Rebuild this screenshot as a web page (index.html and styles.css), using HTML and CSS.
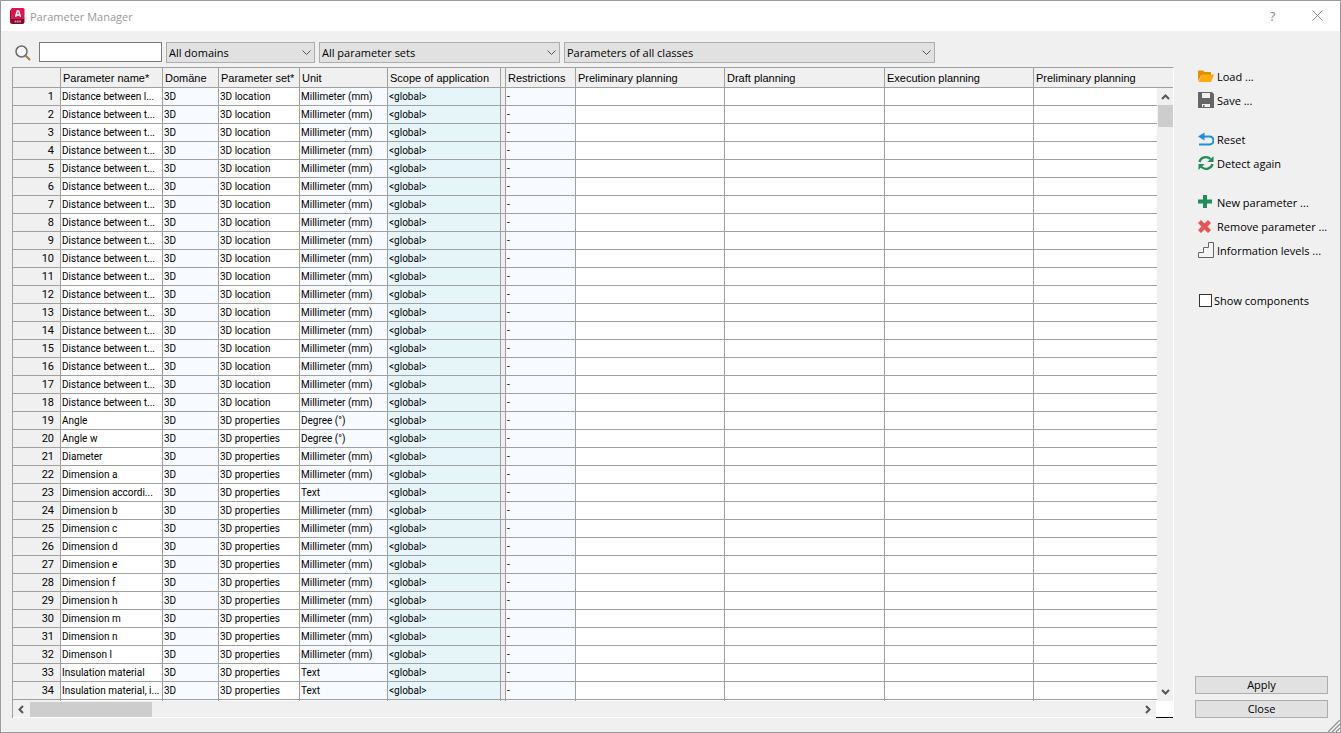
FILE: index.html
```html
<!DOCTYPE html>
<html lang="en">
<head>
  <meta charset="UTF-8" />
  <meta name="viewport" content="width=device-width, initial-scale=1.0"/>
  <title>Parameter Manager</title>
  <link rel="stylesheet" href="styles.css">
</head>
<body>
  <div class="window">
    <header class="titlebar">
      <svg class="logo" width="15" height="17" viewBox="0 0 15 17" aria-hidden="true">
        <path d="M0 2.500L2 1v11l1 4H2a2 2 0 0 1-2-2z" fill="#a80a3c"/>
        <path d="M2 0h11a1.500 1.500 0 0 1 1.500 1.500V11H1V1z" fill="#e51050"/>
        <path d="M1 11h13.500v3a2 2 0 0 1-2 2H2.500z" fill="#7a0a2c"/>
        <path d="M5.500 9L7.300 3h1.400L10.500 9M6.300 7h3.500" fill="none" stroke="#fff" stroke-width="1.500"/>
        <path d="M4.500 13.500h6.500" stroke="#d98aa3" stroke-width="1.800" stroke-dasharray="1.800 .5"/>
      </svg>
      <h1>Parameter Manager</h1>
      <button class="title-btn" aria-label="Help">?</button>
      <button class="title-btn" aria-label="Close window">
        <svg width="11" height="11" viewBox="0 0 11 11"><path d="M.5.5l10 10M10.500.5l-10 10" stroke="#8c8c8c" fill="none"/></svg>
      </button>
    </header>

    <div class="content">
      <main class="main">
        <div class="toolbar">
          <label class="search-icon" for="search" aria-label="Search">
            <svg width="17" height="17" viewBox="0 0 17 17">
              <circle cx="6.500" cy="6.500" r="5.500" fill="#f7f7f7" stroke="#666b70" stroke-width="1.500"/>
              <path d="M10.500 10.500l4.500 4.500" stroke="#b07a35" stroke-width="2"/>
            </svg>
          </label>
          <input type="text" id="search" class="search" />
          <div class="combo combo-domain">
            <select aria-label="Domain"><option>All domains</option></select>
            <svg class="chevron" width="9" height="6" viewBox="0 0 9 6"><path d="M.5.5l4 4 4-4"/></svg>
          </div>
          <div class="combo combo-set">
            <select aria-label="Parameter set"><option>All parameter sets</option></select>
            <svg class="chevron" width="9" height="6" viewBox="0 0 9 6"><path d="M.5.5l4 4 4-4"/></svg>
          </div>
          <div class="combo combo-class">
            <select aria-label="Class"><option>Parameters of all classes</option></select>
            <svg class="chevron" width="9" height="6" viewBox="0 0 9 6"><path d="M.5.5l4 4 4-4"/></svg>
          </div>
        </div>

        <div class="grid">
          <div class="grid-view">
            <table>
              <colgroup>
                <col class="w-num"><col class="w-name"><col class="w-domain"><col class="w-set">
                <col class="w-unit"><col class="w-scope"><col class="w-split"><col class="w-restr">
                <col class="w-phase"><col class="w-draft"><col class="w-phase"><col>
              </colgroup>
              <thead>
                <tr>
                  <th></th><th>Parameter name*</th><th>Domäne</th><th>Parameter set*</th>
                  <th>Unit</th><th>Scope of application</th><th></th><th>Restrictions</th>
                  <th>Preliminary planning</th><th>Draft planning</th><th>Execution planning</th><th>Preliminary planning</th>
                </tr>
              </thead>
              <tbody id="rows"></tbody>
            </table>
            <div class="vscroll">
              <svg width="9" height="6" viewBox="0 0 9 6"><path d="M1 5l3.500-3.500L8 5"/></svg>
              <div class="vthumb"></div>
              <svg class="down" width="9" height="6" viewBox="0 0 9 6"><path d="M1 1l3.500 3.500L8 1"/></svg>
            </div>
          </div>
          <div class="grid-foot">
            <div class="hscroll">
              <svg width="6" height="9" viewBox="0 0 6 9"><path d="M5 1L1.500 4.500 5 8"/></svg>
              <div class="hthumb"></div>
              <svg class="right" width="6" height="9" viewBox="0 0 6 9"><path d="M1 1l3.500 3.500L1 8"/></svg>
            </div>
            <div class="corner"></div>
          </div>
        </div>
      </main>

      <aside class="side">
        <div class="group">
          <button class="action">
            <svg width="16" height="16" viewBox="0 0 16 16">
              <path d="M0 13V3.500Q0 2.500 1 2.500h4l1.500 1.500H12q1 0 1 1v2H3.500z" fill="#e38d00"/>
              <path d="M3.500 6.500H16L13 14H.5z" fill="#ffaa0d"/>
            </svg>
            Load ...
          </button>
          <button class="action">
            <svg width="16" height="16" viewBox="0 0 16 16">
              <path d="M0 0h14l2 2v14H0z" fill="#666"/>
              <path d="M4 1h8v5H4z" fill="#f0f0f0"/>
              <path d="M4 12h8v3H4z" fill="#f0f0f0"/>
              <path d="M5 13h1.500v2H5z" fill="#666"/>
            </svg>
            Save ...
          </button>
        </div>
        <div class="group">
          <button class="action">
            <svg width="16" height="16" viewBox="0 0 16 16">
              <path d="M5 5.500h6.500a3.700 3.700 0 0 1 0 8H1" fill="none" stroke="#1d8fe1" stroke-width="2.200"/>
              <path d="M0 5.500L6.500 1.500v8z" fill="#1d8fe1"/>
            </svg>
            Reset
          </button>
          <button class="action">
            <svg width="16" height="16" viewBox="0 0 16 16">
              <path d="M1.500 7A6.500 6 0 0 1 12.500 4M14.500 9A6.500 6 0 0 1 3.500 12" fill="none" stroke="#218d57" stroke-width="2.300"/>
              <path d="M15.500 1v6H9.500zM.5 15V9h6z" fill="#218d57"/>
            </svg>
            Detect again
          </button>
        </div>
        <div class="group">
          <button class="action">
            <svg width="16" height="16" viewBox="0 0 16 16"><path d="M5 1h4v4.500h5v4H9V14H5V9.500H0v-4h5z" fill="#218d57"/></svg>
            New parameter ...
          </button>
          <button class="action">
            <svg width="16" height="16" viewBox="0 0 16 16"><path d="M3 2l3.500 3.500L10 2l3 3-3.500 3.500L13 12l-3 3-3.500-3.500L3 15l-3-3 3.500-3.500L0 5z" fill="#ea5454"/></svg>
            Remove parameter ...
          </button>
          <button class="action">
            <svg width="16" height="16" viewBox="0 0 16 16"><path d="M.5 15.500v-5h5v-5h5v-5h5v15z" fill="#f4f4f4" stroke="#666"/></svg>
            Information levels ...
          </button>
        </div>
        <label class="check"><input type="checkbox" /> Show components</label>

        <div class="buttons">
          <button class="push">Apply</button>
          <button class="push">Close</button>
        </div>
      </aside>
    </div>

    <svg class="grip" width="12" height="12" viewBox="0 0 12 12" aria-hidden="true">
      <path d="M0 12L12 0M4 12l8-8M8 12l4-4" stroke="#999" stroke-width="1.500"/>
      <path d="M2 12L12 2M6 12l6-6M10 12l2-2" stroke="#fff"/>
    </svg>
  </div>

  <script>
    const mm = "Millimeter (mm)";
    const deg = "Degree (°)";
    const data = [["Distance between l...", "3D location", mm]];

    for (let i = 0; i < 17; i++) {
      data.push(["Distance between t...", "3D location", mm]);
    }

    [
      ["Angle", deg],
      ["Angle w", deg],
      ["Diameter", mm],
      ["Dimension a", mm],
      ["Dimension accordi...", "Text"],
      ["Dimension b", mm],
      ["Dimension c", mm],
      ["Dimension d", mm],
      ["Dimension e", mm],
      ["Dimension f", mm],
      ["Dimension h", mm],
      ["Dimension m", mm],
      ["Dimension n", mm],
      ["Dimenson l", mm],
      ["Insulation material", "Text"],
      ["Insulation material, i...", "Text"]
    ].forEach(([name, unit]) => data.push([name, "3D properties", unit]));

    function row(num, name, domain, set, unit, scope, restr) {
      return `<tr>
        <td class="num">${num}</td><td>${name}</td><td class="tint">${domain}</td><td>${set}</td>
        <td class="tint">${unit}</td><td class="scope">${scope}</td><td class="split"></td>
        <td class="tint">${restr}</td><td></td><td></td><td></td><td></td>
      </tr>`;
    }

    // the last, empty row is cut off by the scrollbar
    document.getElementById("rows").innerHTML =
      data.map((d, i) => row(i + 1, d[0], "3D", d[1], d[2], "&lt;global&gt;", "-")).join("") +
      row("", "", "", "", "", "", "");
  </script>
</body>
</html>
```
FILE: styles.css
```css
* {
  box-sizing: border-box;
}

body {
  margin: 0;
  font-family: "Open Sans", "Noto Sans", sans-serif;
  font-size: 11px;
  color: #000;
}

button, input, select {
  font: inherit;
  color: inherit;
  margin: 0;
}

.window {
  position: relative;
  display: flex;
  flex-direction: column;
  height: 100vh;
  border: 1px solid #9c9c9c;
  background: #f0f0f0;
  overflow: hidden;
}

/* title bar */
.titlebar {
  display: flex;
  align-items: center;
  height: 30px;
  padding-left: 9px;
  background: #fff;
  color: #999;
}

.titlebar h1 {
  flex: 1;
  margin: 0 0 0 5px;
  font-size: 11px;
  font-weight: normal;
}

.title-btn {
  width: 45px;
  height: 30px;
  padding: 0;
  border: none;
  background: none;
  font-size: 13px;
  color: #8c8c8c;
}

.content {
  flex: 1;
  display: flex;
  min-height: 0;
  padding: 11px 12px 14px 11px;
}

.main {
  flex: 1;
  display: flex;
  flex-direction: column;
  min-width: 0;
}

/* filters */
.toolbar {
  display: flex;
  gap: 4px;
  height: 25px;
}

.search-icon {
  width: 23px;
  padding: 3px;
}

.search {
  width: 123px;
  height: 20px;
  border: 1px solid #7a7a7a;
  background: #fff;
}

.combo {
  position: relative;
  height: 21px;
}

.combo-domain {
  width: 149px;
}

.combo-set {
  width: 241px;
}

.combo-class {
  width: 371px;
}

.combo select {
  appearance: none;
  width: 100%;
  height: 21px;
  padding: 0 20px 0 2px;
  border: 1px solid #adadad;
  border-radius: 0;
  background: #e1e1e1;
}

.chevron {
  position: absolute;
  top: 8px;
  right: 4px;
  fill: none;
  stroke: #555;
  pointer-events: none;
}

/* table */
.grid {
  flex: 1;
  display: flex;
  flex-direction: column;
  min-height: 0;
  border-top: 1px solid #a0a0a0;
  border-left: 1px solid #a0a0a0;
  border-right: 1px solid #fff;
}

.grid-view {
  position: relative;
  flex: 1;
  min-height: 0;
  overflow: hidden;
}

table {
  width: 100%;
  table-layout: fixed;
  border-spacing: 0;
  font-family: Roboto, "Liberation Sans", sans-serif;
}

th, td {
  padding: 0 0 0 1px;
  border-right: 1px solid #a0a0a0;
  border-bottom: 1px solid #a0a0a0;
  text-align: left;
  font-weight: normal;
  white-space: nowrap;
  overflow: hidden;
}

th {
  height: 20px;
  padding-left: 2px;
  background: #f0f0f0;
  font-family: "Liberation Sans", Arial, sans-serif;
}

td {
  height: 18px;
  background: #fff;
  font-size: 10px;
}

th:last-child {
  border-right: none;
}

.w-num { width: 48px; }
.w-name { width: 102px; }
.w-domain { width: 56px; }
.w-set { width: 81px; }
.w-unit { width: 88px; }
.w-scope { width: 113px; }
.w-split { width: 5px; }
.w-restr { width: 70px; }
.w-phase { width: 149px; }
.w-draft { width: 160px; }

.num {
  padding-right: 6px;
  background: #f0f0f0;
  font-size: 11px;
  text-align: right;
}

.tint {
  background: #f7fbff;
}

.scope {
  background: #e6f5fa;
}

.split {
  background: #f0f0f0;
}

/* scrollbars */
.vscroll {
  position: absolute;
  top: 20px;
  right: 0;
  bottom: 0;
  display: flex;
  flex-direction: column;
  align-items: center;
  width: 16px;
  padding: 6px 0;
  background: #f0f0f0;
}

.vscroll svg, .hscroll svg {
  flex: none;
  fill: none;
  stroke: #555;
  stroke-width: 2;
}

.vthumb {
  width: 15px;
  height: 22px;
  margin-top: 5px;
  background: #cdcdcd;
}

.down {
  margin-top: auto;
}

.grid-foot {
  display: flex;
  height: 17px;
}

.hscroll {
  flex: 1;
  display: flex;
  align-items: center;
  padding: 0 5px;
  border-bottom: 1px solid #fff;
}

.hthumb {
  width: 122px;
  height: 15px;
  margin-left: 6px;
  background: #cdcdcd;
}

.right {
  margin-left: auto;
}

.corner {
  width: 17px;
  height: 17px;
  border-bottom: 1px solid #000;
  background: #fff;
}

/* right column */
.side {
  display: flex;
  flex-direction: column;
  width: 154px;
  padding: 22px 0 0 21px;
}

.group {
  margin-bottom: 15px;
}

.action {
  display: flex;
  align-items: center;
  gap: 3px;
  width: 100%;
  height: 24px;
  padding: 0 0 0 3px;
  border: none;
  background: none;
  white-space: nowrap;
}

.check {
  display: flex;
  align-items: center;
  gap: 2px;
  margin-top: 16px;
  padding-left: 4px;
}

.check input {
  appearance: none;
  width: 13px;
  height: 13px;
  border: 1px solid #333;
  background: #fff;
}

.buttons {
  display: flex;
  flex-direction: column;
  gap: 6px;
  margin-top: auto;
}

.push {
  height: 18px;
  padding: 0;
  border: 1px solid #adadad;
  background: #e1e1e1;
  line-height: 16px;
}

.grip {
  position: absolute;
  right: 0;
  bottom: 0;
}
```
